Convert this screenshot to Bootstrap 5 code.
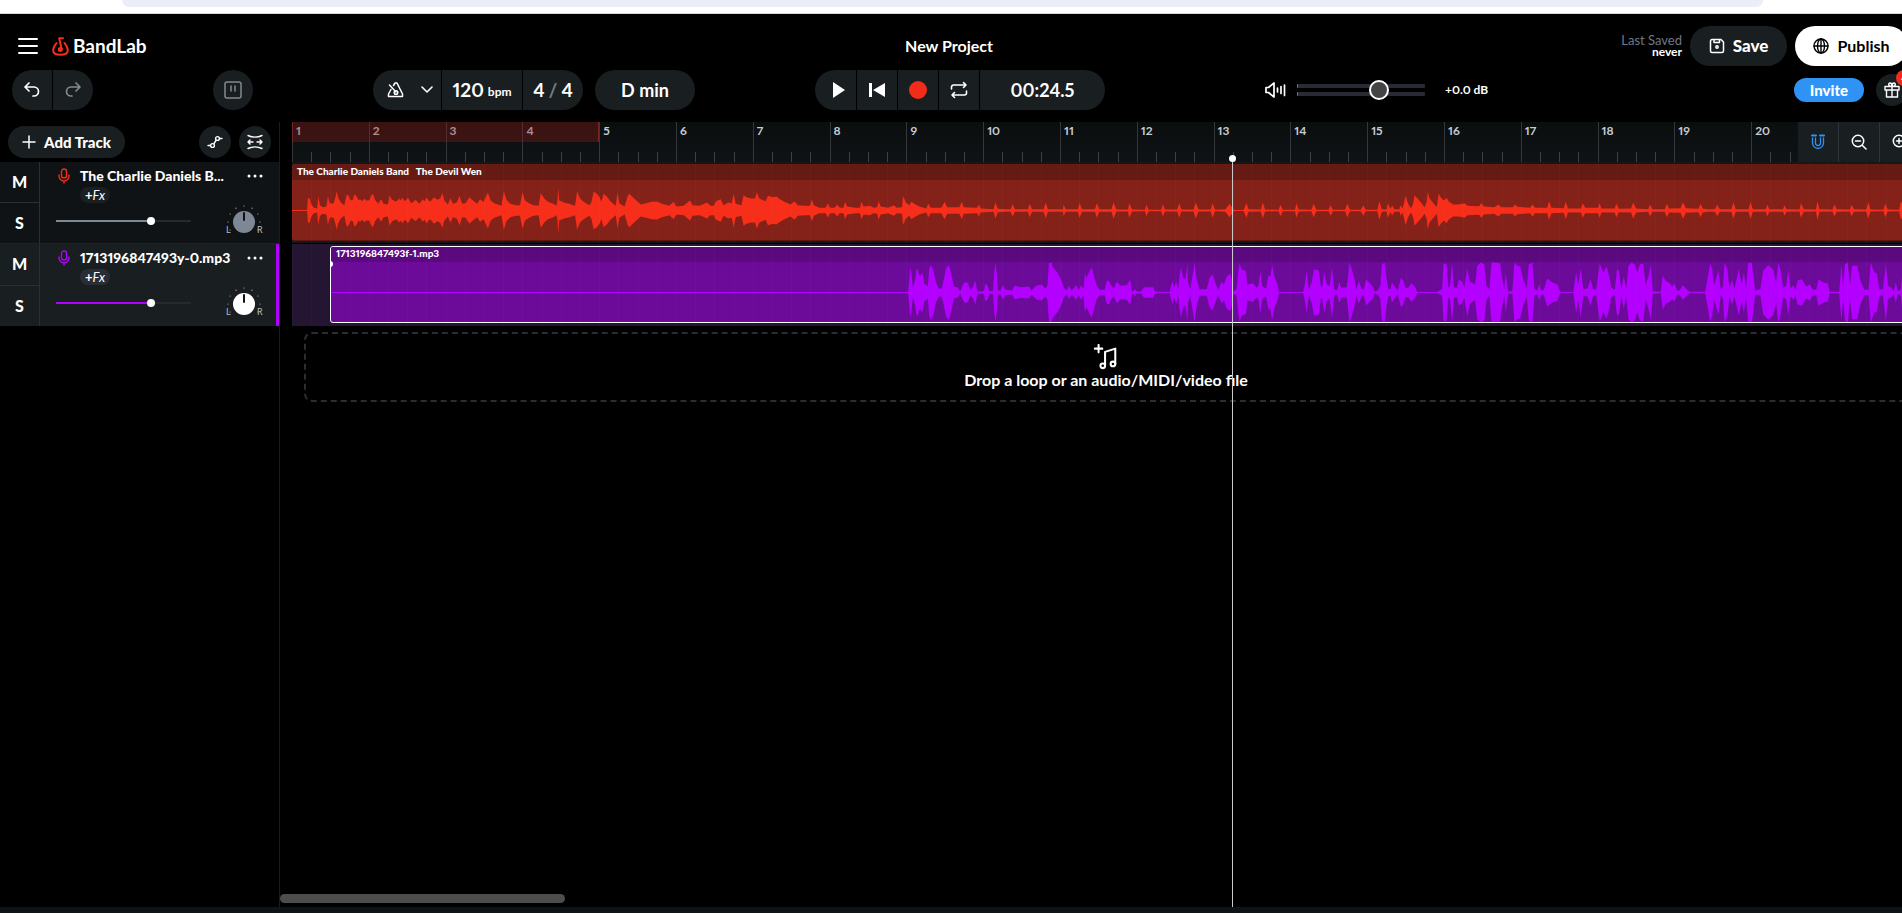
<!DOCTYPE html>
<html lang="en" data-bs-theme="dark">
<head>
<meta charset="utf-8">
<meta name="viewport" content="width=device-width, initial-scale=1">
<title>New Project - BandLab</title>
<link href="https://cdn.jsdelivr.net/npm/bootstrap@5.3.0/dist/css/bootstrap.min.css" rel="stylesheet">
<style>
:root{--pill:#191e20;--panel:#0f1315;--line:#2b2f32;--bar:calc(384px / 5);--beat:calc(96px / 5);--lane:82px}
body{background:#000;color:#fff;font-family:Lato,"Open Sans",sans-serif;font-weight:700;font-variant-numeric:proportional-nums;overflow:hidden}
svg{display:block;fill:none;stroke:currentColor;stroke-linecap:round;stroke-linejoin:round}
button{border:0;padding:0;color:#fff;background:var(--pill);font-weight:700;font-variant-numeric:inherit;display:flex;align-items:center;justify-content:center}
.browser{height:14px;background:#fff;border-bottom:1px solid #d5d7db;padding:0 157px 0 122px}
.address{height:7px;background:#ebeef8;border-radius:0 0 16px 16px}
.app{width:calc(100% + 18px);min-height:100vh}
.top-row{display:grid;grid-template-columns:1fr auto 1fr;align-items:center;padding:0 12px}
.row-a{padding-top:12px;height:52px}
.row-b{padding-top:4px;height:56px;padding-bottom:12px}
.proj{font-size:16px;padding-right:22px}
.brand{font-size:19px;line-height:24px;color:#fff;text-decoration:none}
.pill{height:40px;border-radius:20px;overflow:hidden;display:flex;gap:1px}
.pill button{height:40px}
.w40{width:40px}
.round{border-radius:50%}
.save{width:97px;border-radius:20px;height:40px;font-size:17px;font-weight:900}
.publish{width:113px;border-radius:20px;height:40px;background:#fff;color:#000;font-size:16px}
.saved{font-size:12px;line-height:12px}
.saved .muted{color:#6f7889;font-weight:400;font-size:13px}
.tools-left{width:241px}
.big{font-size:19px}
.clock{width:125px;font-size:18px}
.metro{width:68px}.metro.pill-in{padding-left:6px}
.vol{width:369px;font-size:12px}
.fader{width:128px;height:20px;margin:0 16px 0 10px}
.meter{left:0;right:0;height:4px;background:#282b33;border-left:1px solid #2a9d78;border-radius:1px}
input[type=range]{appearance:none;-webkit-appearance:none;background:none;display:block;margin:0;width:100%}
.fader input{height:20px;position:relative}
.fader input::-webkit-slider-thumb{-webkit-appearance:none;width:20px;height:20px;border-radius:50%;border:2px solid #fff;background:#444}
.invite{width:70px;height:24px;border-radius:12px;background:#2f92f5;font-size:15px;font-weight:900}
.alert-dot{left:20px;top:-4px;width:16px;height:16px;border-radius:50%;background:#f22c1a;font-size:10px;line-height:16px;text-align:center}
.side{width:280px;border-right:1px solid #1a1d1f}
.side-head{height:40px;padding:0 8px}
.add{width:117px;height:32px;border-radius:16px;font-size:15px;font-weight:900}
.s32{width:32px;height:32px}
.track{height:var(--lane);background:var(--panel);border-bottom:1px solid #222}
.track.on{background:var(--pill);border-right:3px solid #b000ff;border-bottom:0}
.ms{width:40px;border-right:1px solid var(--line)}
.ms button{flex:1;background:none;font-size:16px;font-weight:900}
.ms button+button{border-top:1px solid var(--line)}
.tbody{padding:6px 0 0 16px;width:232px}
.tname{font-size:14px;font-weight:900;line-height:16px;width:155px;white-space:nowrap}
.fx{width:30px;height:16px;border-radius:8px;font-size:13px;margin:3px 0 0 24px;background:#1a1f22;line-height:16px}
.fx i{font-weight:400}
.on .fx{background:#2b2d36}
.tvol{width:135px}
.tvol input{height:8px;background:linear-gradient(90deg,var(--c) 70%,#26292d 70%) center/100% 2px no-repeat}
.tvol input::-webkit-slider-thumb{-webkit-appearance:none;width:8px;height:8px;border-radius:50%;background:#fff}
.dots{background:none;width:16px;height:16px}
.time{padding-left:12px;min-width:0}
.ruler{height:40px;background:repeating-linear-gradient(90deg,#3c4043 0 1px,transparent 1px var(--beat)) 0 30px/100% 10px no-repeat,linear-gradient(#0b0e0f,#0f1315)}
.barno{flex:0 0 var(--bar);height:40px;border-left:1px solid #34383b;font-size:12px;line-height:18px;padding-left:3px;color:#c3ccd3}
.loop{left:0;top:0;width:calc(var(--bar) * 4);height:20px;background:rgba(145,28,24,.36);border:solid #742620;border-width:0 1px}
.zoombar{width:122px;gap:1px;background:#303437}
.zoombar button{flex:0 0 40px;height:40px}
.lane{height:var(--lane);background:#14181a;position:relative;padding-top:2px;border-bottom:1px solid #000}
.lane.two{background:#241533;border-bottom:0}
.grid-lines{position:absolute;inset:0;pointer-events:none;background:repeating-linear-gradient(90deg,rgba(255,255,255,.02) 0 1px,transparent 1px var(--beat))}
.clip{height:77px;overflow:hidden;border-radius:3px 0 0 3px}
.clip header{height:16px;font-size:10px;font-weight:900;line-height:14px;padding-left:5px;white-space:pre}
.clip svg{stroke:none;width:100%;height:60px}
.red{background:#842219;border-bottom:1px solid #5d1711}
.red header{background:#661a14}.red svg{fill:#f62e1a}
.purple{background:#6c0b9a;border:1px solid #fff;margin-left:38px}
.purple header{background:#5a097f;height:15px;line-height:12px}.purple svg{fill:#b300ff}
.handle{left:38px;top:17px;width:3px;height:6px;background:#fff;border-radius:0 3px 3px 0}
.drop{margin:6px 12px 0 12px;height:70px;border:2px dashed #2b2d31;border-radius:8px;font-size:16px;line-height:20px;padding-top:10px}
.playhead{left:calc(12px + var(--beat) * 49 - 1px);top:37px;bottom:0;width:1px;background:#c9c9c9;pointer-events:none}
.playhead::before{content:"";position:absolute;left:-3px;top:-4px;width:7px;height:7px;border-radius:50%;background:#fff}
.hscroll{width:285px;height:9px;border-radius:5px;background:#4d4d4d;margin:auto 0 4px -12px}
.foot{height:6px;background:var(--panel)}
</style>
</head>
<body>
<div class="app d-flex flex-column">
<div class="browser"><div class="address"></div></div>

<div class="top-row row-a">
  <div class="d-flex align-items-center">
    <button class="bg-transparent ms-1 me-2" aria-label="Menu"><svg width="24" height="18" viewBox="0 0 24 18" stroke-width="2"><path d="M3 2h18M3 9h18M3 16h18"/></svg></button>
    <a href="#" class="brand d-flex align-items-center"><svg class="ms-1 me-1" width="17" height="19" viewBox="0 0 17 19" stroke-width="2" style="color:#f62e1a"><path d="M4.500 6C2.500 8.500 1.200 11 1.200 13.200c0 3 2.500 4.600 7.300 4.600s7.300-1.600 7.300-4.600c0-2.200-1.300-4.700-3.300-7.200"/><path d="M9.700 12.500 7.200 1.300H11"/><circle cx="8.300" cy="12.500" r="1.500" fill="currentColor"/></svg>BandLab</a>
  </div>
  <div class="proj">New Project</div>
  <div class="d-flex justify-content-end align-items-center">
    <div class="saved text-end me-2"><div class="muted">Last Saved</div><div>never</div></div>
    <button class="save me-2"><svg class="me-2" width="16" height="16" viewBox="0 0 16 16" stroke-width="1.500"><path d="M3 1.500h9L14.500 4v9a1.500 1.500 0 0 1-1.500 1.500H3A1.500 1.500 0 0 1 1.500 13V3A1.500 1.500 0 0 1 3 1.500zM5 2v2.500h5.500V2"/><circle cx="8" cy="9" r="1.200"/></svg>Save</button>
    <button class="publish"><svg class="me-2" width="16" height="16" viewBox="0 0 16 16" stroke-width="1.400"><circle cx="8" cy="8" r="7"/><ellipse cx="8" cy="8" rx="3.500" ry="7"/><path d="M8 1v14M1 8h14"/></svg>Publish</button>
  </div>
</div>

<div class="top-row row-b">
  <div class="d-flex align-items-center">
    <div class="tools-left d-flex justify-content-between">
      <div class="pill">
        <button class="w40" aria-label="Undo"><svg width="18" height="18" viewBox="0 0 18 18" stroke-width="1.700"><path d="M6 2 2 6l4 4M2.500 6H11a4.500 4.500 0 0 1 0 9h-1"/></svg></button>
        <button class="w40" aria-label="Redo" style="color:#85898b"><svg width="18" height="18" viewBox="0 0 18 18" stroke-width="1.700"><path d="m12 2 4 4-4 4M15.500 6H7a4.500 4.500 0 0 0 0 9h1"/></svg></button>
      </div>
      <button class="w40 round" style="color:#85898b" aria-label="Mixer"><svg width="18" height="18" viewBox="0 0 18 18" stroke-width="1.500"><rect x="1" y="1" width="16" height="16" rx="2"/><path d="M7 5v5M11 5v5"/></svg></button>
    </div>
    <div class="d-flex mx-auto gap-2">
      <div class="pill me-1">
        <button class="metro pill-in gap-3" aria-label="Metronome"><svg width="17" height="16" viewBox="0 0 17 16" stroke-width="1.500"><path d="M6.500 3.500 8 1h2l5.500 11v2.500h-14V12L4 7.500M2.500 3l6.500 7"/><circle cx="9" cy="10.500" r="1.800"/></svg><svg width="14" height="8" viewBox="0 0 14 8" stroke-width="1.600"><path d="m2 1 5 5 5-5"/></svg></button>
        <button style="width:80px" class="big">120<span class="saved ms-1 pt-1">bpm</span></button>
        <button style="width:60px" class="big">4<span class="mx-1" style="color:#777c7e">/</span>4</button>
      </div>
      <div class="pill"><button style="width:100px;font-size:18px">D min</button></div>
    </div>
  </div>
  <div class="pill">
    <button style="width:41px;padding-left:7px" aria-label="Play"><svg width="14" height="16" viewBox="0 0 14 16"><path fill="#fff" stroke="none" d="M1 0v16l12-8z"/></svg></button>
    <button class="w40" aria-label="Rewind"><svg width="16" height="16" viewBox="0 0 16 16"><path fill="#fff" stroke="none" d="M0 1h3v14H0zM16 1v14L4 8z"/></svg></button>
    <button class="w40" aria-label="Record"><svg width="18" height="18" viewBox="0 0 18 18"><circle cx="9" cy="9" r="9" fill="#f22c1a" stroke="none"/></svg></button>
    <button class="w40" aria-label="Loop"><svg width="18" height="18" viewBox="0 0 18 18" stroke-width="1.600"><path d="M1.500 8V6a2 2 0 0 1 2-2H16M13.500 1.500 16 4l-2.500 2.500M16.500 10v2a2 2 0 0 1-2 2H2M4.500 11.500 2 14l2.500 2.500"/></svg></button>
    <button class="clock">00:24.5</button>
  </div>
  <div class="d-flex align-items-center">
    <div class="vol mx-auto d-flex align-items-center">
      <svg width="22" height="18" viewBox="0 0 22 18" stroke-width="1.700"><path d="M1 6.500h2.500L9 2v14l-5.500-4.500H1zM12.500 7v4M16 5.500v7M19.500 4v10.500"/></svg>
      <div class="fader position-relative"><div class="meter position-absolute" style="top:4px"></div><div class="meter position-absolute" style="top:12px"></div><input type="range" value="67" aria-label="Master volume"></div>
      <span class="ms-1">+0.0 dB</span>
    </div>
    <button class="invite me-2">Invite</button>
    <button class="s32 round position-relative ms-1" aria-label="Gifts"><svg width="16" height="16" viewBox="0 0 16 16" stroke-width="1.400"><path d="M1 4.500h14V8H1zM2.500 8v7h11V8M8 4.500V15M8 4.500C4 4.500 4 1 6 1s2 3.500 2 3.500S8 1 10 1s2 3.500-2 3.500"/></svg><span class="alert-dot position-absolute">4</span></button>
  </div>
</div>

<div class="d-flex flex-grow-1">
  <aside class="side flex-shrink-0">
    <div class="side-head d-flex align-items-center gap-2">
      <button class="add me-auto"><svg class="me-2" width="14" height="14" viewBox="0 0 14 14" stroke-width="1.500"><path d="M7 1v12M1 7h12"/></svg>Add Track</button>
      <button class="s32 round" aria-label="Automation"><svg width="16" height="16" viewBox="0 0 16 16" stroke-width="1.400"><path d="M1 11.500h2.500M7 9.500l2-3M12.500 4.500H15"/><circle cx="5.500" cy="11.500" r="1.900"/><circle cx="10.500" cy="4.500" r="1.900"/></svg></button>
      <button class="s32 round" aria-label="Fit"><svg width="16" height="16" viewBox="0 0 16 16" stroke-width="1.400"><path d="M1 1.500c4 2 10 2 14 0M1 14.500c4-2 10-2 14 0M6 8H1M10 8h5M3 6 1 8l2 2M13 6l2 2-2 2"/></svg></button>
    </div>
    <div id="tracks"></div>
  </aside>

  <main class="time flex-grow-1 d-flex flex-column position-relative">
    <div class="d-flex">
      <div class="ruler d-flex flex-grow-1 overflow-hidden position-relative" id="ruler"><div class="loop position-absolute"></div></div>
      <div class="zoombar d-flex flex-shrink-0">
        <button aria-label="Snap" style="color:#2f92f5"><svg width="14" height="16" viewBox="0 0 14 16" stroke-width="1.300" stroke-linecap="butt"><path d="M1.500 4v5a5.500 5.500 0 0 0 11 0V4M4.500 4v5a2.500 2.500 0 0 0 5 0V4"/><path d="M1 1.500h4M9 1.500h4" stroke-width="2"/></svg></button>
        <button aria-label="Zoom out"><svg width="16" height="16" viewBox="0 0 16 16" stroke-width="1.500"><circle cx="7" cy="7" r="5.700"/><path d="M4.500 7h5M11.500 11.500 15 15"/></svg></button>
        <button aria-label="Zoom in"><svg width="16" height="16" viewBox="0 0 16 16" stroke-width="1.500"><circle cx="7" cy="7" r="5.700"/><path d="M4.500 7h5M7 4.500v5M11.500 11.500 15 15"/></svg></button>
      </div>
    </div>
    <div class="lane"><div class="clip red"><header>The Charlie Daniels Band   The Devil Wen</header><svg id="waveRed"></svg></div><div class="grid-lines"></div></div>
    <div class="lane two"><div class="clip purple"><header>1713196847493f-1.mp3</header><svg id="wavePurple"></svg></div><div class="handle position-absolute"></div><div class="grid-lines"></div></div>
    <div class="drop d-flex flex-column align-items-center"><svg width="26" height="26" viewBox="0 0 26 28" stroke-width="2.200"><path d="M5 1v8M1 5h8M12 23.500V8.500L23 5v16.500"/><circle cx="9.500" cy="23.500" r="2.500"/><circle cx="20.500" cy="21.500" r="2.500"/></svg><span>Drop a loop or an audio/MIDI/video file</span></div>
    <div class="hscroll"></div>
    <div class="playhead position-absolute"></div>
  </main>
</div>
<div class="foot"></div>
</div>

<script>
const tracks = [
  {name:'The Charlie Daniels B...', mic:'#f22c1a', level:'#7d8796', knob:'#7d8796', on:false},
  {name:'1713196847493y-0.mp3', mic:'#b000ff', level:'#b000ff', knob:'#fff', on:true}
];
const ring = [...Array(9)].map((_, i) => {
  const a = (-120 + i * 30) * Math.PI / 180;
  return `<circle cx="${20 + 16 * Math.sin(a)}" cy="${19 - 16 * Math.cos(a)}" r=".6" fill="#bbb" stroke="none"/>`;
}).join('');
document.getElementById('tracks').innerHTML = tracks.map((t, i) => `
<div class="track d-flex ${t.on ? 'on' : ''}">
  <div class="ms d-flex flex-column"><button>M</button><button>S</button></div>
  <div class="tbody">
    <div class="d-flex align-items-center gap-2">
      <svg class="flex-shrink-0" width="16" height="16" viewBox="0 0 16 16" stroke-width="1.400" style="color:${t.mic}"><rect x="5.500" y="1" width="5" height="9" rx="2.500"/><path d="M3 7v1a5 5 0 0 0 10 0V7M8 13v2"/></svg>
      <div class="tname">${t.name}</div>
      <button class="dots ms-1" aria-label="More"><svg width="16" height="4" viewBox="0 0 16 4"><g fill="#fff" stroke="none"><circle cx="2" cy="2" r="1.500"/><circle cx="8" cy="2" r="1.500"/><circle cx="14" cy="2" r="1.500"/></g></svg></button>
    </div>
    <button class="fx">+<i>Fx</i></button>
    <div class="d-flex align-items-center">
      <div class="tvol" style="--c:${t.level}"><input type="range" value="72" aria-label="Volume of track ${i + 1}"></div>
      <svg class="ms-auto me-2" width="40" height="36" viewBox="0 0 40 36" role="img" aria-label="Pan">${ring}
        <circle cx="20" cy="19" r="11" fill="${t.knob}" stroke="none"/><path d="M20 10v7" stroke="#111" stroke-width="2"/>
        <g fill="#bbb" stroke="none" font-size="9" font-family="Lato" font-weight="400"><text x="2" y="30">L</text><text x="33" y="30">R</text></g></svg>
    </div>
  </div>
</div>`).join('');

document.getElementById('ruler').insertAdjacentHTML('beforeend',
  [...Array(20)].map((_, i) => `<div class="barno">${i + 1}</div>`).join(''));

const red = [
 [-12, 2.8, '34:1,76:1,78:37,83:37,88:18,95:8,104:6,107:42,112:16,120:10,130:12,134:42,140:20,150:22,155:40,159:58,163:38,170:25,180:15,186:45,190:48,198:30,204:32,208:48,213:45,220:30,224:34,230:28,236:35,242:30,250:30,256:46,260:50,266:32,275:20,283:34,290:20,302:18,307:45,314:32,325:26,334:36,338:30,342:38,350:28,358:38,368:22,380:32,390:20,400:34,405:28,410:38,420:26,432:40,440:32,448:36,455:52,460:30,470:18,477:37,484:20,495:24,503:44,510:20,520:22,530:40,540:30,552:20,560:34,570:26,578:44,582:54,590:30,600:22,610:18,620:14,627:58,634:32,645:20,660:16,672:16,679:55,686:30,700:20,710:16,724:14,730:52,740:36,750:26,765:20,774:14,777:30,779:68,782:30,795:24,810:20,826:14,832:58,840:36,850:26,866:16,872:25,878:56,886:52,895:40,900:26,906:50,915:42,925:28,940:14,945:53,950:22,965:12,974:45,978:50,986:42,1000:28,1010:18,1025:22,1040:26,1055:27,1070:20,1090:14,1102:26,1110:12,1130:14,1148:30,1155:16,1175:14,1196:24,1205:14,1215:14,1220:27,1234:34,1242:16,1255:24,1265:22,1270:50,1276:20,1292:16,1298:46,1306:40,1320:36,1330:36,1335:55,1342:36,1360:28,1366:44,1380:40,1390:42,1400:34,1412:26,1430:18,1440:28,1450:16,1470:14,1484:14,1489:32,1495:16,1510:8,1528:8,1534:22,1540:8,1553:8,1560:18,1566:10'],
 [528, 2.8, '58:8,66:8,70:26,76:12,100:8,112:8,116:26,122:12,140:14,150:8,160:10,164:28,170:12,190:8,207:16,215:8,230:10,232:42,236:36,240:24,250:16,256:26,264:20,278:12,298:6,303:20,310:8,340:8,349:26,356:10,390:10,397:26,402:10,440:8,445:18,450:6,486:4,491:24,498:5,520:4,534:4,539:19,546:4,582:4,587:20,594:4,626:4,632:24,638:4,680:4,682:17,688:4,722:4,727:22,734:4,770:4,775:22,782:4,816:4,822:24,830:3,862:3,866:22,874:3,910:2,914:17,920:2,955:2,960:18,966:3,1000:3,1006:22,1012:3,1046:3,1052:24,1060:3,1094:3,1099:22,1106:2,1135:4,1147:20,1156:6,1160:1,1186:1,1194:22,1200:4,1234:3,1240:24,1246:3,1284:2,1289:17,1296:2,1330:2,1334:22,1340:3,1376:2,1382:20,1390:2,1424:2,1430:16,1436:2'],
 [1048, 2.79, '1:2,14:2,20:20,28:2,58:2,65:16,72:2,104:2,110:28,117:4,130:3,134:22,140:5,146:14,152:4,166:4,169:16,174:6,178:20,183:44,190:20,198:6,204:20,208:46,216:36,226:24,236:10,242:25,245:56,250:36,262:20,270:10,275:50,282:38,290:30,297:38,304:26,316:18,330:18,348:22,356:14,388:13,394:22,402:12,430:10,442:18,450:10,482:10,488:18,495:11,530:8,537:18,544:8,578:8,583:28,590:8,624:7,630:26,636:6,672:6,677:22,684:8,720:8,724:22,730:6,766:6,771:20,778:5,812:6,818:24,826:6,860:4,865:18,872:4,906:4,912:20,918:6,950:7,957:25,965:7,1000:5,1006:20,1012:6,1026:4,1046:4,1052:17,1060:4,1092:4,1098:24,1104:4,1140:4,1145:25,1152:4,1188:4,1192:18,1198:4,1236:4,1240:16,1246:4,1282:3,1286:22,1294:4,1328:3,1332:28,1338:4,1374:3,1379:18,1386:4,1422:3,1427:17,1434:4,1468:3,1474:25,1480:3,1516:2,1521:20,1528:3,1560:2,1565:28,1575:6,1620:3']
];
const purple = [
 [-50, 2.8, '141:1'],
 [490, 2.8, '244:1,248:50,250:74,253:60,257:15,264:40,267:68,271:70,274:55,279:50,284:60,290:25,299:18,303:70,306:82,314:70,322:30,330:12,338:12,344:40,350:70,357:84,364:60,372:18,382:16,390:4,396:20,404:32,412:28,418:10,425:16,432:36,438:4,456:4,460:26,466:22,472:4,482:6,485:60,489:88,492:60,496:6,503:6,509:22,516:8,535:6,542:20,560:16,582:18,590:6,602:20,618:24,628:12,634:20,638:88,645:90,650:74,662:60,672:40,680:14,688:6,694:20,702:6,714:22,722:8,728:22,735:10,739:58,744:44,750:60,758:76,764:50,772:20,780:8,794:8,800:34,806:36,812:22,820:12,828:32,838:20,856:22,866:38,870:6,876:4,878:12,884:3,896:3,904:16,930:16,936:2,976:1,980:20,985:36,988:14,995:32,1000:8,1004:50,1008:76,1014:44,1020:40,1026:84,1028:30,1034:10,1040:50,1046:88,1052:40,1060:10,1080:10,1088:44,1096:54,1104:30,1112:8,1122:32,1128:24,1136:48,1146:56,1150:42,1155:4,1164:10,1168:60,1172:88,1178:70,1190:64,1194:24,1210:28,1220:14,1225:20,1230:64,1236:18,1246:12,1253:52,1258:48,1264:82,1270:44,1278:26,1282:1,1350:1,1354:20,1360:64,1366:8,1374:30,1380:70,1394:66,1400:16,1404:20,1409:62,1416:26,1424:18,1431:76,1437:10,1444:6,1452:32'],
 [1010, 2.79, '0:14,16:16,20:50,24:90,30:70,38:40,42:8,50:34,58:10,64:10,70:38,78:30,90:16,94:2,104:8,110:20,114:84,122:90,127:40,132:12,138:10,142:30,150:18,158:6,164:30,167:44,174:36,180:14,188:14,196:28,206:18,213:1,268:1,282:10,286:84,294:88,300:14,304:20,310:90,315:16,324:14,328:38,338:34,344:16,352:72,360:32,374:24,380:80,390:90,400:84,406:20,414:10,420:90,430:90,444:88,450:40,455:12,460:58,466:4,478:4,484:90,492:80,500:78,508:40,516:20,518:10,524:84,534:90,540:10,547:6,553:24,558:6,566:8,575:42,590:30,604:24,611:2,648:1,656:60,662:24,669:74,676:10,688:12,696:40,704:10,712:10,722:86,732:60,741:78,748:50,754:14,764:8,770:70,776:64,782:10,789:48,796:12,802:80,811:90,820:84,826:60,834:84,843:88,850:20,858:50,865:84,870:4,892:2,898:52,906:34,918:28,924:18,930:28,938:6,944:6,954:22,972:2,1016:2,1024:50,1030:88,1036:70,1040:20,1046:40,1053:66,1060:8,1066:20,1070:90,1078:70,1084:12,1090:36,1098:12,1110:70,1118:26,1124:60,1130:12,1136:90,1146:88,1152:40,1156:6,1170:10,1178:66,1192:82,1206:68,1214:30,1220:90,1226:70,1234:14,1242:20,1248:68,1254:12,1262:22,1268:8,1274:36,1286:40,1298:18,1308:24,1316:10,1326:8,1332:40,1346:30,1358:28,1363:2,1390:2,1396:84,1401:20,1406:84,1414:90,1420:20,1426:80,1440:80,1450:34,1460:8,1472:8,1478:90,1488:60,1495:58,1502:10,1512:8,1520:84,1526:20,1536:14,1542:4,1548:30,1554:4,1562:10,1566:60,1568:90,1620:10']
];
function draw(id, segments, mid) {
  const pts = segments.flatMap(([x0, per, list]) => list.split(',').map(p => {
    const [x, h] = p.split(':').map(Number);
    return [x0 + x / per, Math.max(h / 3, .5)];
  }));
  const up = pts.map(([x, h]) => `${x.toFixed(1)} ${(mid - h).toFixed(1)}`);
  const down = pts.reverse().map(([x, h]) => `${x.toFixed(1)} ${(mid + h).toFixed(1)}`);
  document.getElementById(id).innerHTML = `<path d="M${up.join('L')}L${down.join('L')}Z"/>`;
}
draw('waveRed', red, 30.5);
draw('wavePurple', purple, 30.5);
</script>
<script src="https://cdn.jsdelivr.net/npm/bootstrap@5.3.0/dist/js/bootstrap.bundle.min.js"></script>
</body>
</html>
